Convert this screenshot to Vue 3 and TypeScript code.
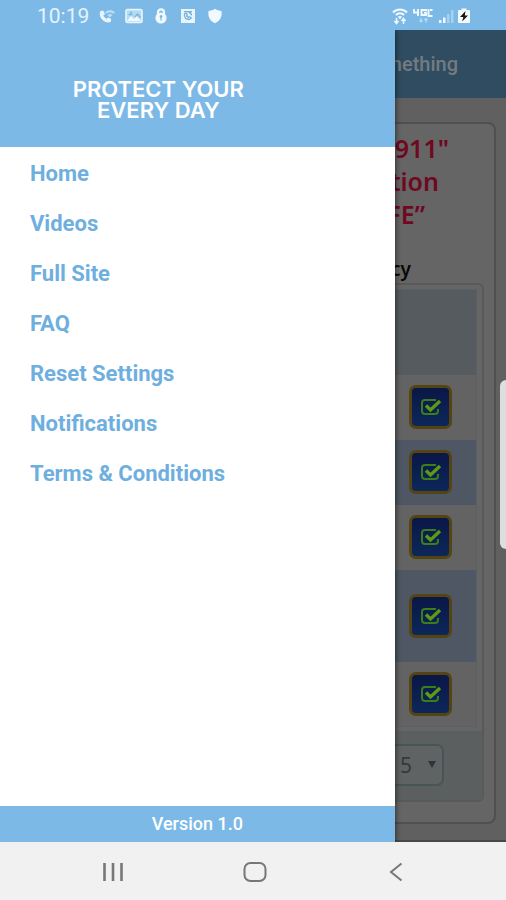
<script setup lang="ts">
interface MenuItem {
  label: string
  href: string
}

interface Row {
  id: number
  tall: boolean
}

const menu: MenuItem[] = [
  { label: 'Home', href: '#home' },
  { label: 'Videos', href: '#videos' },
  { label: 'Full Site', href: '#full-site' },
  { label: 'FAQ', href: '#faq' },
  { label: 'Reset Settings', href: '#reset' },
  { label: 'Notifications', href: '#notifications' },
  { label: 'Terms & Conditions', href: '#terms' },
]

const rows: Row[] = [
  { id: 1, tall: false },
  { id: 2, tall: false },
  { id: 3, tall: false },
  { id: 4, tall: true },
  { id: 5, tall: false },
]
</script>

<template>
  <div class="screen">
    <header class="status">
      <div class="status-left">
        <span class="clock">10:19</span>
        <svg width="18" height="16" viewBox="0 0 18 16" aria-hidden="true">
          <path d="M2.500 3.500 5 3l1.500 3-1.500 1.500c.7 1.700 1.900 2.900 3.500 3.700L10 9.800l2.800 1.500-.5 2.400C6.500 15.500.8 9.500 2.500 3.500Z" fill="#e8f5fd" stroke="#e8f5fd" />
          <path d="M7 4.200c3-2.600 7-2.600 10 0l-1.500 1.600c-2.200-1.800-4.800-1.800-7 0ZM9.500 6.900c1.600-1.200 3.400-1.200 5 0L12 9.600Z" fill="#b9def5" />
        </svg>
        <svg width="18" height="16" viewBox="0 0 18 16" aria-hidden="true">
          <rect x="1" y="1.500" width="16" height="13" rx="1.500" fill="#b4dbf4" stroke="#e8f5fd" stroke-width="1.600" />
          <path d="m2 13 4-5 3 3 2.500-3 4.500 5Z" fill="#f0f9ff" />
          <path d="M3.500 6.500h4M5 4.500h2M10 9l2.500-3 3 3.500" fill="none" stroke="#75b4df" stroke-width="1.300" />
        </svg>
        <svg width="18" height="16" viewBox="0 0 14 16" aria-hidden="true">
          <path d="M4 7V4.200C4 .3 10 .3 10 4.200V7" fill="none" stroke="#f0f9ff" stroke-width="2.200" />
          <circle cx="7" cy="10" r="5.600" fill="#f0f9ff" />
          <path d="M5.600 8.600a1.400 1.400 0 1 1 2 1.200V12.500h-1.200V9.900Z" fill="#75b4df" />
        </svg>
        <svg width="18" height="16" viewBox="0 0 16 16" aria-hidden="true">
          <rect x="1" y="1" width="14" height="14" fill="#e8f5fd" />
          <path d="M4.500 6c-.8 3.500 1.800 6 5 5.400l1.800-1.600-1.800-1-1 .8-2-1.800.8-1.200L6 5ZM8.500 4.500c1.800 0 3 1.200 3 3M4 3.600h8" fill="none" stroke="#75b4df" stroke-width="1.300" />
        </svg>
        <svg width="18" height="16" viewBox="0 0 16 16" aria-hidden="true">
          <path d="M8 .8c2 1.400 4.200 2 6.500 2.200.8 6-1.500 10-6.500 12.200C3 13 .7 9 1.500 3 3.800 2.800 6 2.200 8 .8Z" fill="#f0f9ff" />
        </svg>
      </div>
      <div class="status-right">
        <svg width="16" height="18" viewBox="0 0 16 18" aria-hidden="true">
          <path d="M1 5.500c4-4 10-4 14 0M3.800 8c2.600-2.200 5.800-2.200 8.400 0" fill="none" stroke="#f0f9ff" stroke-width="2" />
          <path d="m5.800 9.800c1.400-1 3-1 4.400 0L8 12.200Z" fill="#f0f9ff" />
          <path d="M4.500 11v5M2.500 14l2 2.500 2-2.500M11.500 17v-5M9.500 14l2-2.500 2 2.500" fill="none" stroke="#f0f9ff" stroke-width="1.500" />
        </svg>
        <svg width="22" height="18" viewBox="0 0 22 18" aria-hidden="true">
          <path d="M2 2v3.500h5M6 2v7M15 3H9.500v5H14V5.700h-2M16.500 2v7h4M20.500 3h-2.500" fill="none" stroke="#f0f9ff" stroke-width="1.900" />
          <path d="M9 11v4M7.500 13.500 9 15l1.500-1.500M14 15.500v-4M12.500 13l1.500-1.500 1.500 1.500" fill="none" stroke="#b9def5" stroke-width="1.200" />
        </svg>
        <svg width="16" height="18" viewBox="0 0 16 18" aria-hidden="true">
          <path d="M1 13h2.500v3H1ZM5 10.500h2.500V16H5Z" fill="#f0f9ff" />
          <path d="M9 7h2.500v9H9ZM13 3h2.500v13H13Z" fill="#a4d2f0" />
        </svg>
        <svg width="12" height="18" viewBox="0 0 12 18" aria-hidden="true">
          <path d="M3.500 1.500h5V3H11q1 0 1 1v11q0 1-1 1H1q-1 0-1-1V4q0-1 1-1h2.500Z" fill="#f5fbff" />
          <path d="M7.500 4 2 10h3.300L4.200 14.500 10 8.500H6.800Z" fill="#101820" />
        </svg>
      </div>
    </header>

    <div class="stage">
      <main class="page">
        <div class="app-bar">Something</div>
        <div class="content">
          <section class="card">
            <h1 class="headline">
              <span class="line-first">911"</span>
              <span class="line-second">tion</span>
              <span class="line-third">FE”</span>
            </h1>
            <p class="subject">cy</p>
            <div class="panel">
              <table class="list">
                <thead>
                  <tr><th></th></tr>
                </thead>
                <tbody>
                  <tr v-for="row in rows" :key="row.id" :class="{ tall: row.tall }">
                    <td>
                      <button type="button" class="check" :aria-label="`Select row ${row.id}`">
                        <svg width="22" height="18" viewBox="0 0 22 18" aria-hidden="true">
                          <path d="M16 2H5Q2 2 2 5v8q0 3 3 3h10q3 0 3-3v-2" fill="none" stroke="#3b7c1c" stroke-width="2" />
                          <path d="m6 7.500 4.500 4.500L20 3" fill="none" stroke="#5c9a14" stroke-width="3.400" />
                        </svg>
                      </button>
                    </td>
                  </tr>
                </tbody>
              </table>
              <div class="pager">
                <div class="select-wrap">
                  <select class="page-size" aria-label="Rows per page">
                    <option>5</option>
                  </select>
                  <svg class="caret" width="8" height="8" viewBox="0 0 8 8" aria-hidden="true">
                    <path d="M0 0h8L4 7Z" fill="#2c3638" />
                  </svg>
                </div>
              </div>
            </div>
          </section>
        </div>
      </main>

      <aside class="drawer">
        <div class="brand">
          <div class="slogan">PROTECT YOUR<br />EVERY DAY</div>
        </div>
        <nav class="menu">
          <a v-for="item in menu" :key="item.label" :href="item.href">{{ item.label }}</a>
        </nav>
        <footer class="version">Version 1.0</footer>
      </aside>

      <span class="edge-handle"></span>
    </div>

    <footer class="system-nav">
      <button type="button" aria-label="Recent apps">
        <svg width="24" height="20" viewBox="0 0 24 20" aria-hidden="true">
          <path d="M3.500 1v18M12 1v18M20.500 1v18" stroke="#777" stroke-width="2.600" />
        </svg>
      </button>
      <button type="button" aria-label="Home screen">
        <svg width="24" height="20" viewBox="0 0 24 20" aria-hidden="true">
          <rect x="1.500" y="1" width="21" height="18" rx="6" fill="none" stroke="#777" stroke-width="2" />
        </svg>
      </button>
      <button type="button" aria-label="Back">
        <svg width="24" height="20" viewBox="0 0 24 20" aria-hidden="true">
          <path d="M17.500 1.500 7 10l10.500 8.500" fill="none" stroke="#777" stroke-width="2" />
        </svg>
      </button>
    </footer>
  </div>
</template>

<style>
body {
  margin: 0;
}
</style>

<style scoped>
* {
  box-sizing: border-box;
}

.screen {
  display: flex;
  flex-direction: column;
  min-height: 100vh;
  font-family: Roboto, "Liberation Sans", sans-serif;
  background: #5f5f5f;
}

.status {
  display: flex;
  flex-shrink: 0;
  justify-content: space-between;
  align-items: center;
  height: 30px;
  padding: 2px 36px 0 37px;
  background: #7cb9e6;
}

.status-left,
.status-right {
  display: flex;
  align-items: center;
}

.status-left {
  gap: 9px;
}

.status-right {
  gap: 4px;
}

.clock {
  color: #e4f3fd;
  font-size: 21px;
  line-height: 24px;
}

.stage {
  position: relative;
  display: flex;
  flex: 1;
  overflow: hidden;
}

.page {
  display: flex;
  flex: 1;
  flex-direction: column;
}

.app-bar {
  height: 68px;
  padding-right: 48px;
  background: #2f4c60;
  color: #747b80;
  font-size: 20px;
  font-weight: 500;
  line-height: 68px;
  text-align: right;
}

.content {
  flex: 1;
  padding: 24px 10px 16px;
  background: #606060;
  border-bottom: 2px solid #484848;
}

.card {
  padding: 8px 10px 20px;
  background: #656565;
  border: 2px solid #505050;
  border-radius: 8px;
}

.headline {
  display: flex;
  flex-direction: column;
  margin: 0;
  color: #700822;
  font-family: "Noto Sans", "Open Sans", sans-serif;
  font-size: 25px;
  font-weight: 600;
  line-height: 33px;
  text-align: right;
}

.line-first {
  padding-right: 35px;
}

.line-second {
  padding-right: 45px;
}

.line-third {
  padding-right: 59px;
}

.subject {
  margin: 24px 73px 0 0;
  color: #080808;
  font-family: "Noto Sans", "Open Sans", sans-serif;
  font-size: 19px;
  font-weight: 600;
  line-height: 28px;
  text-align: right;
}

.panel {
  border: 2px solid #585a5a;
  border-radius: 6px;
}

.list {
  width: calc(100% - 9px);
  margin: 4px;
  border-collapse: collapse;
  border: 1px solid #5b6064;
}

.list th {
  height: 85px;
  padding: 0;
  background: #555b5f;
}

.list td {
  height: 65px;
  padding: 0 24px 0 0;
  background: #636363;
  text-align: right;
}

.list tr.tall td {
  height: 92px;
}

.list tbody tr:nth-child(even) td {
  background: #4e5763;
}

.check {
  display: inline-flex;
  align-items: center;
  justify-content: center;
  width: 43px;
  height: 44px;
  padding: 0;
  vertical-align: middle;
  background: linear-gradient(#0a1746, #0d2759);
  border: 3px solid #544413;
  border-radius: 7px;
}

.pager {
  display: flex;
  justify-content: flex-end;
  padding: 13px 38px 14px;
  background: #5c5f60;
}

.select-wrap {
  position: relative;
}

.page-size {
  width: 80px;
  height: 42px;
  padding: 0 30px 0 0;
  appearance: none;
  background: #606363;
  border: 2px solid #475556;
  border-radius: 7px;
  color: #343a3b;
  font-family: "Noto Sans", sans-serif;
  font-size: 21px;
  text-align: right;
  text-align-last: right;
}

.caret {
  position: absolute;
  top: 17px;
  right: 8px;
  pointer-events: none;
}

.drawer {
  position: absolute;
  top: 0;
  bottom: 0;
  left: 0;
  display: flex;
  flex-direction: column;
  width: 78%;
  background: #fff;
  box-shadow: 1px 0 5px rgba(0, 0, 0, 0.5);
}

.brand {
  height: 117px;
  padding: 49px 103px 0 25px;
  background: #7cb9e6;
}

.slogan {
  color: #fff;
  font-family: Inter, sans-serif;
  font-size: 22px;
  font-weight: 600;
  line-height: 21px;
  text-align: center;
  white-space: nowrap;
}

.menu {
  display: flex;
  flex: 1;
  flex-direction: column;
  padding-top: 2px;
}

.menu a {
  padding-left: 30px;
  color: #6eafe0;
  font-size: 22px;
  font-weight: 700;
  line-height: 50px;
  text-decoration: none;
}

.version {
  background: #7cb9e6;
  color: #fff;
  font-size: 18px;
  font-weight: 500;
  line-height: 36px;
  text-align: center;
}

.edge-handle {
  position: absolute;
  top: 350px;
  right: 0;
  width: 6px;
  height: 169px;
  background: #dedede;
  border-radius: 6px 0 0 6px;
}

.system-nav {
  display: flex;
  flex-shrink: 0;
  justify-content: space-between;
  align-items: center;
  height: 58px;
  padding: 2px 98px 0 101px;
  background: #f1f1f1;
}

.system-nav button {
  display: flex;
  padding: 0;
  background: none;
  border: 0;
}
</style>
